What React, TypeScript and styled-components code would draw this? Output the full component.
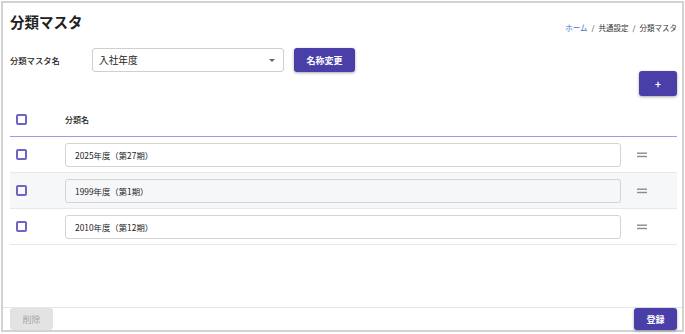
import styled, { createGlobalStyle } from "styled-components";

const GlobalStyle = createGlobalStyle`
  html, body {
    margin: 0;
    padding: 0;
    background: #ffffff;
  }
  body {
    font-family: "Noto Sans CJK JP", "Noto Sans", sans-serif;
    color: #333333;
  }
  * {
    box-sizing: border-box;
  }
`;

const Frame = styled.div`
  margin: 1px;
  width: 683px;
  height: 331px;
  border: 2px solid #d2d2d2;
  display: flex;
  flex-direction: column;
  background: #ffffff;
`;

const Content = styled.div`
  padding: 7px 5px 0 7px;
  flex: 1;
`;

const Header = styled.div`
  display: flex;
  justify-content: space-between;
  align-items: flex-start;
  height: 26px;
`;

const Title = styled.h1`
  margin: 0;
  font-size: 14.5px;
  line-height: 24px;
  font-weight: 700;
  color: #222222;
`;

const Breadcrumb = styled.nav`
  display: flex;
  gap: 4px;
  margin-top: 12px;
  font-size: 7.5px;
  line-height: 12px;
  color: #333333;
`;

const Crumb = styled.span<{ link?: boolean }>`
  color: ${(p) => (p.link ? "#3f73d1" : "#333333")};
`;

const FormRow = styled.div`
  display: flex;
  align-items: center;
  margin-top: 12px;
  height: 24px;
`;

const Label = styled.label`
  width: 82px;
  font-size: 8.3px;
  font-weight: 500;
  color: #222222;
`;

const Select = styled.div`
  position: relative;
  width: 192px;
  height: 24px;
  border: 1px solid #cfcfcf;
  border-radius: 3px;
  display: flex;
  align-items: center;
  padding-left: 6px;
  font-size: 9.7px;
  color: #222222;
`;

const Caret = styled.span`
  position: absolute;
  right: 8px;
  top: 10px;
  width: 0;
  height: 0;
  border-left: 3.5px solid transparent;
  border-right: 3.5px solid transparent;
  border-top: 3.5px solid #666666;
`;

const Button = styled.button<{ disabled?: boolean }>`
  border: none;
  border-radius: 3px;
  font-family: inherit;
  font-size: 9px;
  font-weight: ${(p) => (p.disabled ? 400 : 700)};
  padding: 0;
  cursor: pointer;
  background: ${(p) => (p.disabled ? "#e3e3e3" : "#4a3fa8")};
  color: ${(p) => (p.disabled ? "#a6a6a6" : "#ffffff")};
  box-shadow: ${(p) =>
    p.disabled ? "none" : "0 1px 3px rgba(0, 0, 0, 0.35)"};
`;

const RenameButton = styled(Button)`
  margin-left: 10px;
  width: 61px;
  height: 24px;
`;

const ActionsRow = styled.div`
  display: flex;
  justify-content: flex-end;
  margin-top: -1px;
`;

const AddButton = styled(Button)`
  width: 38px;
  height: 25px;
  font-size: 10px;
`;

const Table = styled.div``;

const HeadRow = styled.div`
  display: flex;
  align-items: center;
  height: 41px;
  padding-top: 6px;
  border-bottom: 1px solid #a19ade;
`;

const Row = styled.div<{ shaded?: boolean }>`
  display: flex;
  align-items: center;
  height: 36px;
  border-bottom: 1px solid #e8e8e8;
  background: ${(p) => (p.shaded ? "#f6f7f9" : "#ffffff")};
`;

const CheckCell = styled.div`
  width: 55px;
  padding-left: 6px;
  display: flex;
  align-items: center;
`;

const Checkbox = styled.span`
  display: block;
  width: 11px;
  height: 11px;
  border: 2px solid #6d64c4;
  border-radius: 2px;
`;

const HeadText = styled.span`
  font-size: 8px;
  font-weight: 500;
  color: #222222;
`;

const NameInput = styled.div<{ shaded?: boolean }>`
  width: 556px;
  height: 24px;
  border: 1px solid #d4d4d4;
  border-radius: 3px;
  display: flex;
  align-items: center;
  padding-left: 9px;
  font-size: 8.4px;
  color: #222222;
  background: ${(p) => (p.shaded ? "#f6f7f9" : "#ffffff")};
`;

const HandleCell = styled.div`
  padding-left: 16px;
  display: flex;
  align-items: center;
`;

const Footer = styled.div`
  display: flex;
  justify-content: space-between;
  border-top: 1px solid #e6e6e6;
  padding: 0 5px 0 7px;
  height: 23px;
`;

const FooterButton = styled(Button)`
  width: 43px;
  height: 22px;
  font-size: 9px;
`;

const rows = ["2025年度（第27期）", "1999年度（第1期）", "2010年度（第12期）"];

function Handle() {
  return (
    <svg width="10" height="6" viewBox="0 0 10 6">
      <rect x="0" y="0.5" width="10" height="1.4" fill="#8c8c8c" />
      <rect x="0" y="3.8" width="10" height="1.4" fill="#8c8c8c" />
    </svg>
  );
}

export default function App() {
  return (
    <>
      <GlobalStyle />
      <Frame>
        <Content>
          <Header>
            <Title>分類マスタ</Title>
            <Breadcrumb>
              <Crumb link>ホーム</Crumb>
              <Crumb>/</Crumb>
              <Crumb>共通設定</Crumb>
              <Crumb>/</Crumb>
              <Crumb>分類マスタ</Crumb>
            </Breadcrumb>
          </Header>
          <FormRow>
            <Label>分類マスタ名</Label>
            <Select>
              入社年度
              <Caret />
            </Select>
            <RenameButton>名称変更</RenameButton>
          </FormRow>
          <ActionsRow>
            <AddButton>+</AddButton>
          </ActionsRow>
          <Table>
            <HeadRow>
              <CheckCell>
                <Checkbox />
              </CheckCell>
              <HeadText>分類名</HeadText>
            </HeadRow>
            {rows.map((name, i) => (
              <Row key={name} shaded={i === 1}>
                <CheckCell>
                  <Checkbox />
                </CheckCell>
                <NameInput shaded={i === 1}>{name}</NameInput>
                <HandleCell>
                  <Handle />
                </HandleCell>
              </Row>
            ))}
          </Table>
        </Content>
        <Footer>
          <FooterButton disabled>削除</FooterButton>
          <FooterButton>登録</FooterButton>
        </Footer>
      </Frame>
    </>
  );
}
